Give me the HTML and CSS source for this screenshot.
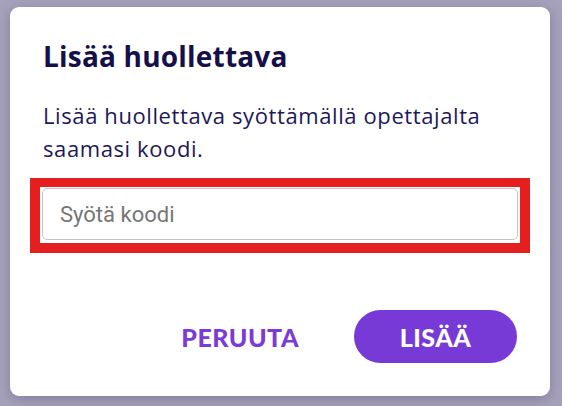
FILE: index.html
```html
<!DOCTYPE html>
<html lang="fi">
<head>
<meta charset="utf-8">
<link rel="stylesheet" href="styles.css">
</head>
<body>
<div class="dialog">
  <h1 class="title">Lisää huollettava</h1>
  <p class="desc">Lisää huollettava syöttämällä opettajalta saamasi koodi.</p>
  <div class="highlight">
    <input class="code-input" type="text" placeholder="Syötä koodi">
  </div>
  <div class="actions">
    <button class="btn btn-text">PERUUTA</button>
    <button class="btn btn-primary">LISÄÄ</button>
  </div>
</div>
</body>
</html>
```
FILE: styles.css
```css
html, body {
  margin: 0;
  padding: 0;
}
body {
  width: 562px;
  height: 406px;
  background: #a7a2bb;
  font-family: "Open Sans", "Noto Sans", sans-serif;
  overflow: hidden;
}
.dialog {
  box-sizing: border-box;
  margin: 7px 0 0 10px;
  width: 540px;
  height: 389px;
  background: #ffffff;
  border-radius: 9px;
  box-shadow: 0 3px 14px rgba(60, 50, 100, 0.35);
  padding: 31px 20px 0 20px;
  display: flex;
  flex-direction: column;
}
.title {
  margin: 0 0 0 13px;
  font-family: "Open Sans", sans-serif;
  font-size: 28px;
  line-height: 36px;
  font-weight: 700;
  letter-spacing: 0.2px;
  color: #15104a;
}
.desc {
  margin: 25px 0 0 13px;
  font-family: "Open Sans", sans-serif;
  font-size: 22px;
  line-height: 33px;
  letter-spacing: 0.6px;
  color: #1d1858;
  max-width: 470px;
}
.highlight {
  margin-top: 13px;
  width: 480px;
  border-style: solid;
  border-color: #e51e1f;
  border-width: 9px 10px 10px 10px;
}
.code-input {
  box-sizing: border-box;
  display: block;
  width: 476px;
  height: 52px;
  margin: 1px 2px 3px 2px;
  border: 1px solid #c4c4c4;
  border-radius: 5px;
  padding: 0 17px;
  font-family: "Roboto", sans-serif;
  font-size: 22px;
  color: #333;
  outline: none;
  background: #fff;
}
.code-input::placeholder {
  color: #767676;
}
.actions {
  margin-top: 57px;
  display: flex;
  justify-content: flex-end;
  align-items: center;
  gap: 55px;
  padding-right: 13px;
}
.btn {
  font-family: "Lato", "Noto Sans", sans-serif;
  font-weight: 900;
  font-size: 25px;
  letter-spacing: 0.5px;
  border: none;
  cursor: pointer;
}
.btn-text {
  background: none;
  color: #7a3bd6;
  padding: 0;
}
.btn-primary {
  background: #773ad6;
  color: #ffffff;
  width: 163px;
  height: 53px;
  border-radius: 27px;
  padding: 0;
}
```
